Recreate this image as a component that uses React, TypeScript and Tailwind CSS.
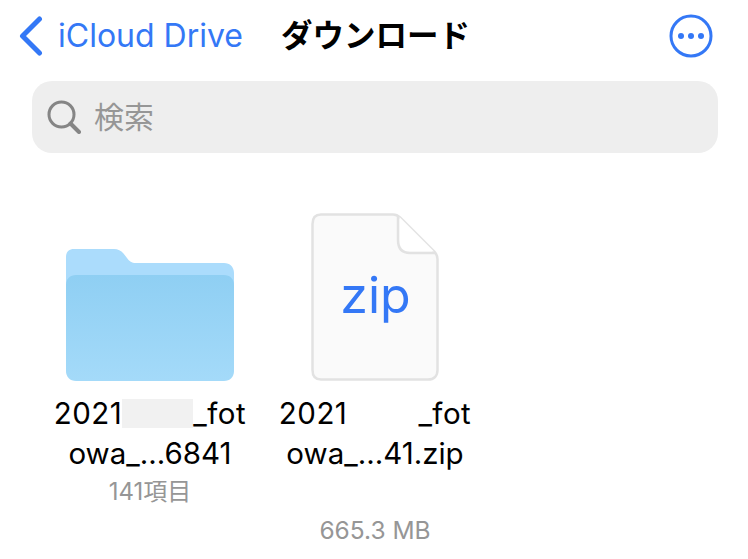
import React from "react";

const font = { fontFamily: '"Inter", "Liberation Sans", "Noto Sans CJK JP", sans-serif' };

function Folder() {
  return (
    <svg width="168" height="132" viewBox="0 0 168 132" className="block">
      <defs>
        <linearGradient id="front" x1="0" y1="0" x2="0" y2="1">
          <stop offset="0" stopColor="#8fcff3" />
          <stop offset="1" stopColor="#a4daf9" />
        </linearGradient>
      </defs>
      <path
        d="M8 0H48C52 0 55 1.5 57.5 4.5L61 9C63.5 12.5 65.500 14 70 14H158C164 14 168 18 168 24V60H0V8C0 3 3 0 8 0Z"
        fill="#abdcfc"
      />
      <path
        d="M10 26H158C164 26 168 30 168 36V122C168 128 164 132 158 132H10C4 132 0 128 0 122V36C0 30 4 26 10 26Z"
        fill="url(#front)"
      />
    </svg>
  );
}

function ZipFile() {
  return (
    <div className="relative w-[128px] h-[168px]">
      <svg width="128" height="168" viewBox="0 0 128 168" className="block">
        <path
          d="M10 1.500H82C85 1.500 87 2.500 89 4.500L123.500 39C125.500 41 126.500 43 126.500 46V157C126.500 163 123 166.500 117 166.500H10C4.500 166.500 1.500 163 1.500 157V11C1.500 5 4.500 1.500 10 1.500Z"
          fill="#fafafa"
          stroke="#e2e2e2"
          strokeWidth="2.500"
        />
        <path d="M88.500 4L123 38.500H99C92 38.500 88.500 34 88.500 27Z" fill="#ffffff" />
        <path
          d="M87 3V27C87 35 91 40 99 40H125"
          fill="none"
          stroke="#e2e2e2"
          strokeWidth="2.500"
        />
      </svg>
      <div className="absolute inset-x-0 top-[52px] pl-[1px] text-center text-[50px] leading-[60px] text-[#3478f6]">
        zip
      </div>
    </div>
  );
}

export default function App() {
  return (
    <div className="w-[748px] h-[559px] bg-white overflow-hidden" style={font}>
      <header className="flex items-center h-[71px] pl-[19px] pr-[35px]">
        <svg width="24" height="40" viewBox="0 0 24 40" className="block mr-[15px]">
          <path
            d="M20.500 3L3.500 20L20.500 37"
            fill="none"
            stroke="#3478f6"
            strokeWidth="5"
            strokeLinecap="round"
            strokeLinejoin="round"
          />
        </svg>
        <span className="text-[32px] leading-[40px] text-[#3478f6] whitespace-nowrap">iCloud Drive</span>
        <span className="ml-[38px] text-[31.500px] leading-[40px] font-bold text-black whitespace-nowrap">ダウンロード</span>
        <svg width="44" height="44" viewBox="0 0 44 44" className="block ml-auto">
          <circle cx="22" cy="22" r="20" fill="none" stroke="#3478f6" strokeWidth="3" />
          <circle cx="12" cy="22" r="3" fill="#3478f6" />
          <circle cx="22" cy="22" r="3" fill="#3478f6" />
          <circle cx="32" cy="22" r="3" fill="#3478f6" />
        </svg>
      </header>

      <div className="mt-[10px] ml-[32px] w-[686px] h-[72px] rounded-[20px] bg-[#eeeeee] flex items-center pl-[15px]">
        <svg width="34" height="34" viewBox="0 0 34 34" className="block mr-[13px]">
          <circle cx="14.500" cy="14.500" r="12.500" fill="none" stroke="#858585" strokeWidth="3" />
          <path d="M23.500 23.500L32 32" stroke="#858585" strokeWidth="4" strokeLinecap="round" />
        </svg>
        <span className="text-[30px] leading-[40px] text-[#969696]">検索</span>
      </div>

      <div className="flex pt-[60px]">
        <div className="w-[300px] h-[326px] flex flex-col items-center">
          <div className="h-[168px] flex items-end">
            <Folder />
          </div>
          <div className="mt-[12px] text-[29.500px] leading-[40px] text-black text-center whitespace-nowrap">
            <div className="flex items-center justify-center tracking-[0.5px]">
              2021
              <span className="inline-block w-[71px] h-[29px] bg-[#f1f1f1]" />
              _fot
            </div>
            <div>owa_...6841</div>
          </div>
          <div className="mt-[1px] text-[24px] leading-[36px] text-[#969696]">141項目</div>
        </div>
        <div className="w-[150px] h-[326px] flex flex-col items-center">
          <ZipFile />
          <div className="mt-[12px] text-[29.500px] leading-[40px] text-black text-center whitespace-nowrap">
            <div className="flex items-center justify-center tracking-[0.5px]">
              2021
              <span className="inline-block w-[71px] h-[29px]" />
              _fot
            </div>
            <div>owa_...41.zip</div>
          </div>
          <div className="mt-[39px] text-[24.500px] leading-[36px] text-[#969696] whitespace-nowrap">665.3 MB</div>
        </div>
      </div>
    </div>
  );
}
